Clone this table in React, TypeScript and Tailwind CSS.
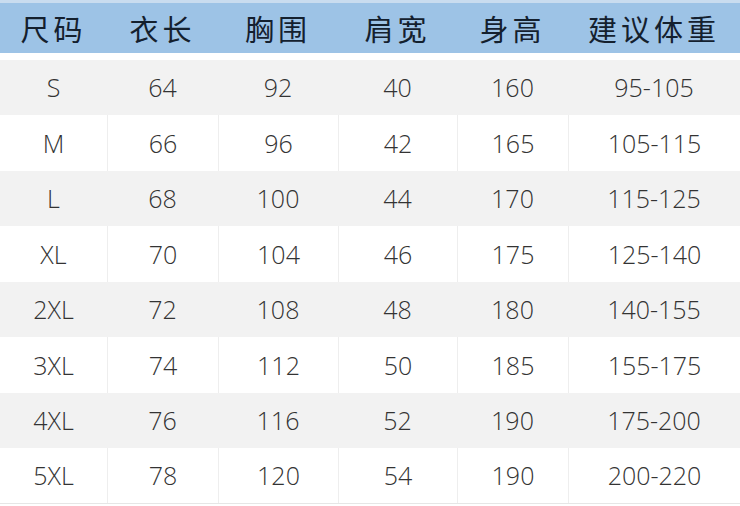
import React from "react";

type Row = [string, string, string, string, string, string];

const headers = ["尺码", "衣长", "胸围", "肩宽", "身高", "建议体重"];

const rows: Row[] = [
  ["S", "64", "92", "40", "160", "95-105"],
  ["M", "66", "96", "42", "165", "105-115"],
  ["L", "68", "100", "44", "170", "115-125"],
  ["XL", "70", "104", "46", "175", "125-140"],
  ["2XL", "72", "108", "48", "180", "140-155"],
  ["3XL", "74", "112", "50", "185", "155-175"],
  ["4XL", "76", "116", "52", "190", "175-200"],
  ["5XL", "78", "120", "54", "190", "200-220"],
];

const cols = "grid grid-cols-[107px_111px_120px_119px_111px_1fr]";

const App: React.FC = () => {
  return (
    <div className="w-[740px] h-[506px] bg-white overflow-hidden">
      {/* Header band */}
      <div className="h-[3px] bg-[#c9dcef]" />
      <div
        className={`${cols} h-[50px] bg-[#9dc3e6] text-[#14202e]`}
        style={{ fontFamily: '"Noto Sans CJK SC", "Noto Sans", sans-serif' }}
      >
        {headers.map((h) => (
          <div
            key={h}
            className="flex items-center justify-center text-[29px] tracking-[4px] leading-none"
          >
            {h}
          </div>
        ))}
      </div>
      <div className="h-[7px] bg-white" />

      {/* Body rows */}
      <div
        className="text-[#333333] font-light"
        style={{ fontFamily: '"Open Sans", "Liberation Sans", sans-serif' }}
      >
        {rows.map((r, i) => {
          const gray = i % 2 === 0;
          return (
            <div
              key={r[0]}
              className={`${cols} ${
                gray ? "h-[55px] bg-[#f2f2f2]" : "h-[56px] bg-white"
              } ${i === rows.length - 1 ? "border-b border-[#e6e6e6]" : ""}`}
            >
              {r.map((c, j) => (
                <div
                  key={j}
                  className={`flex items-center justify-center text-[25px] leading-none ${
                    !gray && j > 0 ? "border-l border-[#eeeeee]" : ""
                  }`}
                >
                  {c}
                </div>
              ))}
            </div>
          );
        })}
      </div>
    </div>
  );
};

export default App;
